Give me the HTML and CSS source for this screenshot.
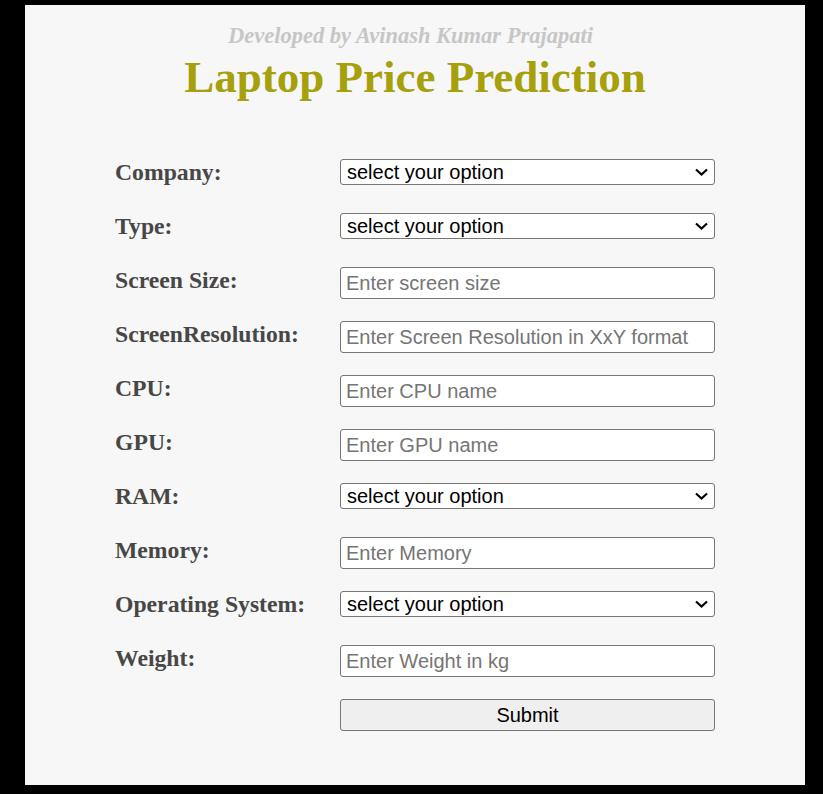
FILE: index.html
```html
<!DOCTYPE html>
<html>
<head>
<meta charset="utf-8">
<title>Laptop Price Prediction</title>
<link rel="stylesheet" href="styles.css">
</head>
<body>
<div class="panel">
  <div class="credit">Developed by Avinash Kumar Prajapati</div>
  <h1 class="title">Laptop Price Prediction</h1>
  <form class="form">
    <label class="lbl">Company:</label>
    <div class="sel-wrap">
      <select class="sel"><option>select your option</option></select>
      <svg class="chev" width="13" height="8" viewBox="0 0 13 8"><path d="M1 1.5 L6.5 6.5 L12 1.5" fill="none" stroke="#000" stroke-width="2.2"/></svg>
    </div>

    <label class="lbl">Type:</label>
    <div class="sel-wrap">
      <select class="sel"><option>select your option</option></select>
      <svg class="chev" width="13" height="8" viewBox="0 0 13 8"><path d="M1 1.5 L6.5 6.5 L12 1.5" fill="none" stroke="#000" stroke-width="2.2"/></svg>
    </div>

    <label class="lbl">Screen Size:</label>
    <input class="inp" type="text" placeholder="Enter screen size">

    <label class="lbl">ScreenResolution:</label>
    <input class="inp" type="text" placeholder="Enter Screen Resolution in XxY format">

    <label class="lbl">CPU:</label>
    <input class="inp" type="text" placeholder="Enter CPU name">

    <label class="lbl">GPU:</label>
    <input class="inp" type="text" placeholder="Enter GPU name">

    <label class="lbl">RAM:</label>
    <div class="sel-wrap">
      <select class="sel"><option>select your option</option></select>
      <svg class="chev" width="13" height="8" viewBox="0 0 13 8"><path d="M1 1.5 L6.5 6.5 L12 1.5" fill="none" stroke="#000" stroke-width="2.2"/></svg>
    </div>

    <label class="lbl">Memory:</label>
    <input class="inp" type="text" placeholder="Enter Memory">

    <label class="lbl">Operating System:</label>
    <div class="sel-wrap">
      <select class="sel"><option>select your option</option></select>
      <svg class="chev" width="13" height="8" viewBox="0 0 13 8"><path d="M1 1.5 L6.5 6.5 L12 1.5" fill="none" stroke="#000" stroke-width="2.2"/></svg>
    </div>

    <label class="lbl">Weight:</label>
    <input class="inp" type="text" placeholder="Enter Weight in kg">

    <button class="btn" type="button">Submit</button>
  </form>
</div>
</body>
</html>
```

FILE: styles.css
```css
html, body {
  margin: 0;
  padding: 0;
  background: #000;
}
body {
  height: 794px;
  overflow: hidden;
}
.panel {
  box-sizing: border-box;
  width: 780px;
  height: 780px;
  margin: 5px 0 0 25px;
  padding: 18px 0 0 0;
  background: #f7f7f7;
}
.credit {
  font-family: "Liberation Serif", "Times New Roman", serif;
  font-style: italic;
  font-weight: bold;
  font-size: 22.5px;
  line-height: 25px;
  color: #c6c6c6;
  text-align: center;
  padding-right: 9px;
}
.title {
  margin: 3px 0 0 0;
  font-family: "Liberation Serif", "Times New Roman", serif;
  font-weight: bold;
  font-size: 45px;
  line-height: 52px;
  color: #a5a00b;
  text-align: center;
}
.form {
  display: grid;
  grid-template-columns: 225px 375px;
  grid-auto-rows: 32px;
  row-gap: 22px;
  align-items: start;
  margin: 56px 0 0 90px;
}
.lbl {
  font-family: "Liberation Serif", "Times New Roman", serif;
  font-weight: bold;
  font-size: 23.7px;
  line-height: 26px;
  color: #474747;
  white-space: nowrap;
}
.sel-wrap {
  position: relative;
  width: 375px;
  height: 26px;
}
.sel {
  -webkit-appearance: none;
  appearance: none;
  box-sizing: border-box;
  width: 375px;
  height: 26px;
  margin: 0;
  padding: 0 6px;
  border: 1px solid #767676;
  border-radius: 3px;
  background: #fff;
  font-family: "Liberation Sans", Arial, sans-serif;
  font-size: 20px;
  color: #000;
}
.chev {
  position: absolute;
  right: 7px;
  top: 9px;
  pointer-events: none;
}
.inp {
  box-sizing: border-box;
  width: 375px;
  height: 32px;
  margin: 0;
  padding: 0 5px;
  border: 1px solid #767676;
  border-radius: 3px;
  background: #fff;
  font-family: "Liberation Sans", Arial, sans-serif;
  font-size: 20px;
  color: #000;
}
.inp::placeholder {
  color: #757575;
}
.btn {
  grid-column: 2;
  box-sizing: border-box;
  width: 375px;
  height: 32px;
  margin: 0;
  padding: 0;
  border: 1px solid #767676;
  border-radius: 3px;
  background: #efefef;
  font-family: "Liberation Sans", Arial, sans-serif;
  font-size: 20px;
  color: #000;
}
```
